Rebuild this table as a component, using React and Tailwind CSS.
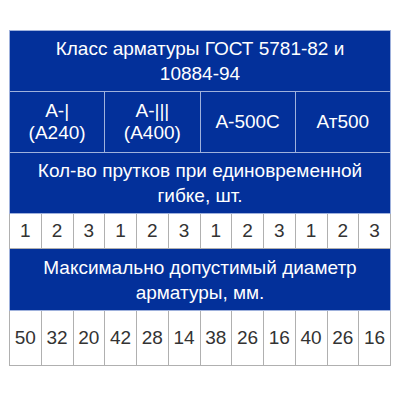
const classes = [
  ['А-|', '(А240)'],
  ['А-|||', '(А400)'],
  ['А-500С'],
  ['Ат500'],
]

const counts = [1, 2, 3, 1, 2, 3, 1, 2, 3, 1, 2, 3]
const diameters = [50, 32, 20, 42, 28, 14, 38, 26, 16, 40, 26, 16]

const blueCell = 'bg-[#03309a] text-white border border-[#9fb1dc] text-center align-middle font-normal'
const whiteCell = 'bg-white text-[#333] border border-[#b0b0b0] text-center align-middle w-[31.8px]'

export default function App() {
  return (
    <div className="w-[400px] h-[400px] bg-white pt-[30px] pl-[9px] font-['Liberation_Sans',Arial,sans-serif]">
      <table className="w-[382px] border-collapse table-fixed text-[19px]">
        <tbody>
          <tr className="h-[61px]">
            <th colSpan={12} className={`${blueCell} leading-[25px] px-8`}>
              Класс арматуры ГОСТ 5781-82 и 10884-94
            </th>
          </tr>
          <tr className="h-[61px]">
            {classes.map((c, i) => (
              <th key={i} colSpan={3} className={`${blueCell} leading-[22px]`}>
                {c.map((line, j) => (
                  <div key={j}>{line}</div>
                ))}
              </th>
            ))}
          </tr>
          <tr className="h-[61px]">
            <th colSpan={12} className={`${blueCell} leading-[25px] px-6`}>
              Кол-во прутков при единовременной гибке, шт.
            </th>
          </tr>
          <tr className="h-[35px]">
            {counts.map((n, i) => (
              <td key={i} className={whiteCell}>{n}</td>
            ))}
          </tr>
          <tr className="h-[62px]">
            <th colSpan={12} className={`${blueCell} leading-[25px] px-8`}>
              Максимально допустимый диаметр арматуры, мм.
            </th>
          </tr>
          <tr className="h-[55px]">
            {diameters.map((n, i) => (
              <td key={i} className={whiteCell}>{n}</td>
            ))}
          </tr>
        </tbody>
      </table>
    </div>
  )
}
